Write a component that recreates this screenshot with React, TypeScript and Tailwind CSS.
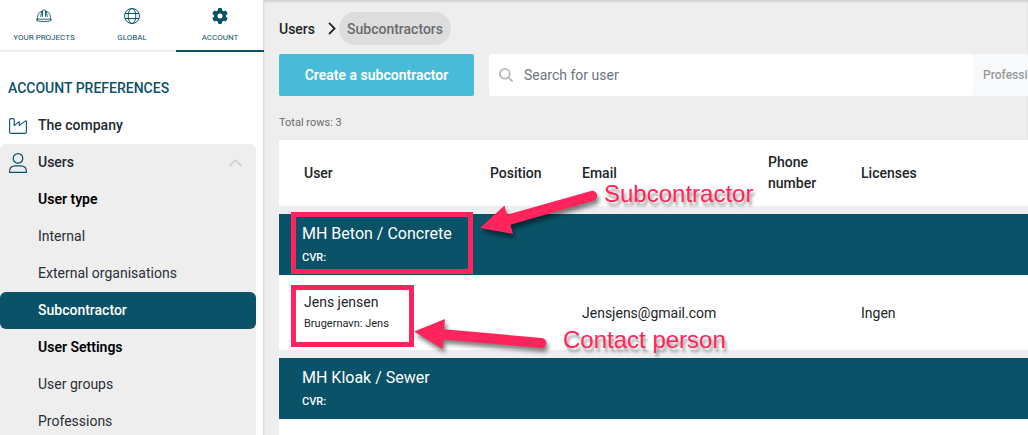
import type { ReactNode } from "react";
import { FaGear } from "react-icons/fa6";

function HelmetIcon() {
  return (
    <svg width="16" height="16" viewBox="0 0 16 16" fill="none" stroke="currentColor" strokeWidth="0.900" strokeLinejoin="round" strokeLinecap="round" aria-hidden="true">
      <path d="M1.500 10.800V9.500A6.500 6.500 0 0 1 5.800 3.300M10.200 3.300a6.500 6.500 0 0 1 4.300 6.200v1.300" />
      <path d="M6.500 8.500V2.800q0-.8.800-.8h1.400q.8 0 .8.800v5.700M5.800 3.300 4.700 8.500M10.200 3.300l1.100 5.200" />
      <path d="M1 11.200h14q.7 0 .5.700-.2.800-1.600 1.100-5.900 1.300-11.800 0-1.400-.3-1.600-1.100-.2-.7.500-.7z" />
    </svg>
  );
}

function GlobeIcon() {
  return (
    <svg width="16" height="16" viewBox="0 0 16 16" fill="none" stroke="currentColor" strokeWidth="1" aria-hidden="true">
      <circle cx="8" cy="8" r="7.500" />
      <ellipse cx="8" cy="8" rx="3.800" ry="7.500" />
      <path d="M1.300 5.500h13.400M1.300 10.500h13.400" />
    </svg>
  );
}

function FactoryIcon() {
  return (
    <svg width="18" height="16" viewBox="0 0 18 16" fill="none" stroke="currentColor" strokeWidth="1.100" strokeLinejoin="round" aria-hidden="true">
      <path d="M.6 2q0-1.400 1.400-1.400h2q1.200 0 1.200 1.200v5.800l4.600-3.700q.5-.3.500.3v3.200l6-4.300q1.100-.6 1.100.5V13.900q0 1.500-1.500 1.500H2.100q-1.500 0-1.500-1.500z" />
    </svg>
  );
}

function PersonIcon() {
  return (
    <svg width="18" height="20" viewBox="0 0 18 20" fill="none" stroke="currentColor" strokeWidth="1.200" strokeLinejoin="round" aria-hidden="true">
      <circle cx="9" cy="5.400" r="4.800" />
      <path d="M.6 19.300v-.8Q.6 12.800 6.300 12.800h5.400q5.700 0 5.700 5.700v.8z" />
    </svg>
  );
}

function Tab({ icon, label, active = false }: { icon: ReactNode; label: string; active?: boolean }) {
  return (
    <a
      href="#"
      aria-current={active ? "page" : undefined}
      className={`flex h-[52px] flex-1 flex-col items-center gap-[9px] border-b-2 pt-2 text-[8px] leading-[10px] ${
        active ? "border-[#0a5268]" : "border-[#eeeeee]"
      }`}
    >
      {icon}
      {label}
    </a>
  );
}

const menu = [
  { label: "User type", kind: "heading" },
  { label: "Internal", kind: "link" },
  { label: "External organisations", kind: "link" },
  { label: "Subcontractor", kind: "active" },
  { label: "User Settings", kind: "heading" },
  { label: "User groups", kind: "link" },
  { label: "Professions", kind: "link" },
];

function Sidebar() {
  return (
    <nav className="w-[264px] shrink-0 border-r border-[#dddddd] bg-white text-sm text-[#0a5268]">
      <div className="-mr-px flex">
        <Tab icon={<HelmetIcon />} label="YOUR PROJECTS" />
        <Tab icon={<GlobeIcon />} label="GLOBAL" />
        <Tab icon={<FaGear size={16} aria-hidden="true" />} label="ACCOUNT" active />
      </div>
      <h2 className="px-2 pt-[26px] pb-[9px] leading-5 font-medium">ACCOUNT PREFERENCES</h2>
      <a href="#" className="flex h-[37px] items-center gap-[11px] pl-[9px] leading-5 font-medium">
        <FactoryIcon />
        <span className="pb-0.5 text-[#222831]">The company</span>
      </a>
      <div className="mr-[7px] rounded-md bg-[#eeeeee]">
        <button type="button" aria-expanded="true" className="flex h-[37px] w-full items-center gap-[11px] pr-[14px] pl-[9px] font-medium">
          <PersonIcon />
          <span className="flex-1 pb-0.5 text-left text-[#222831]">Users</span>
          <svg width="13" height="8" viewBox="0 0 13 8" fill="none" stroke="#c8c8c8" strokeWidth="1.200" aria-hidden="true">
            <path d="M.5 7l6-6 6 6" />
          </svg>
        </button>
        <ul>
          {menu.map((item) => (
            <li key={item.label}>
              {item.kind === "heading" ? (
                <h3 className="flex h-[37px] items-center pb-0.5 pl-[38px] font-semibold text-black">{item.label}</h3>
              ) : (
                <a
                  href="#"
                  className={`flex h-[37px] items-center pb-0.5 pl-[38px] ${
                    item.kind === "active" ? "rounded-md bg-[#0a5268] font-medium text-white" : "text-[#2b2f36]"
                  }`}
                >
                  {item.label}
                </a>
              )}
            </li>
          ))}
        </ul>
      </div>
    </nav>
  );
}

function CompanyRow({ name }: { name: string }) {
  return (
    <tr>
      <th colSpan={5} scope="rowgroup" className="h-[69px] border-t-8 border-[#eeeeee] bg-[#0a5268] px-[23px] text-left font-normal text-white">
        <div className="text-base leading-6">{name}</div>
        <div className="pt-0.5 text-[11px] leading-5 font-medium">CVR:</div>
      </th>
    </tr>
  );
}

const cell = "border-t border-[#eef0f2] px-[25px] text-left";

function UsersTable() {
  return (
    <table className="w-full table-fixed border-separate border-spacing-0 bg-white text-sm text-[#212529]">
      <colgroup>
        <col className="w-[186px]" />
        <col className="w-[92px]" />
        <col className="w-[186px]" />
        <col className="w-[93px]" />
        <col />
      </colgroup>
      <thead>
        <tr className="h-[66px] leading-[21px]">
          {["User", "Position", "Email", "Phone number", "Licenses"].map((title) => (
            <th key={title} scope="col" className="pr-0 pl-[25px] text-left font-medium">
              {title}
            </th>
          ))}
        </tr>
      </thead>
      <tbody>
        <CompanyRow name="MH Beton / Concrete" />
        <tr className="h-[75px]">
          <td className={cell}>
            <div className="leading-5">Jens jensen</div>
            <div className="pt-0.5 text-[11px] leading-5">Brugernavn: Jens</div>
          </td>
          <td className={cell}></td>
          <td className={cell}>Jensjens@gmail.com</td>
          <td className={cell}></td>
          <td className={cell}>Ingen</td>
        </tr>
      </tbody>
      <tbody>
        <CompanyRow name="MH Kloak / Sewer" />
        <tr className="h-[75px]">
          <td colSpan={5} className={cell}></td>
        </tr>
      </tbody>
    </table>
  );
}

function Annotations() {
  return (
    <div className="pointer-events-none absolute inset-0 font-['Liberation_Sans',Arial,sans-serif] text-2xl leading-7 text-[#ff255c]">
      <div className="absolute top-[212px] left-[291px] h-[62px] w-[182px] border-5 border-[#ff255c]" />
      <div className="absolute top-[285px] left-[291px] h-[62px] w-[123px] border-5 border-[#ff255c]" />
      <svg className="absolute top-[190px] left-[410px] drop-shadow-[2px_4px_2px_rgba(0,0,0,0.5)]" width="200" height="170" viewBox="410 190 200 170" fill="#ff255c" aria-hidden="true">
        <path d="M480 228l24.500-22.500 2.500 9.300 84-23.800a5 5 0 0 1 3 9.500l-83.500 24.300 2.500 9.200z" />
        <path d="M414 331.500l31-12.500-.8 10.200 97.500 8.800a5 5 0 0 1-.7 10l-97.500-8.500-.8 9.500z" />
      </svg>
      <span className="absolute top-[180px] left-[604px] whitespace-nowrap [text-shadow:2px_4px_3px_rgba(0,0,0,0.4)]">Subcontractor</span>
      <span className="absolute top-[326px] left-[563px] whitespace-nowrap [text-shadow:2px_4px_3px_rgba(0,0,0,0.4)]">Contact person</span>
    </div>
  );
}

export default function App() {
  return (
    <div className="relative flex h-screen overflow-hidden bg-[#eeeeee] font-[Roboto,sans-serif]">
      <Sidebar />
      <main className="min-w-0 flex-1 pt-3 pl-[15px] text-sm shadow-[inset_0_2px_2px_rgba(0,0,0,0.12)]">
        <nav aria-label="Breadcrumb" className="flex h-[33px] items-center font-medium">
          <a href="#" className="text-[#212529]">Users</a>
          <svg className="mr-[3px] ml-[13px]" width="8" height="13" viewBox="0 0 8 13" fill="none" stroke="#212529" strokeWidth="1.800" aria-hidden="true">
            <path d="M1 .8l5.600 5.700L1 12.200" />
          </svg>
          <span className="flex h-full items-center rounded-full bg-[#dddddd] px-2 text-[#6c6c6c]">Subcontractors</span>
        </nav>
        <div className="mt-[9px] flex h-[42px]">
          <button type="button" className="w-[195px] shrink-0 rounded-xs bg-[#47bbd7] font-semibold text-white">
            Create a subcontractor
          </button>
          <label className="ml-[15px] flex min-w-0 flex-1 items-center gap-[11px] rounded-xs bg-white pl-[10px]">
            <svg className="shrink-0" width="14" height="14" viewBox="0 0 14 14" fill="none" stroke="#b9b9b9" strokeWidth="1.800" aria-hidden="true">
              <circle cx="5.800" cy="5.800" r="4.900" />
              <path d="M9.300 9.300l4.300 4.300" />
            </svg>
            <input type="search" aria-label="Search for user" placeholder="Search for user" className="min-w-0 flex-1 outline-none placeholder:text-[#6c757d]" />
          </label>
          <button type="button" className="w-[55px] shrink-0 overflow-hidden rounded-l-xs bg-[#f8f9fb] pl-[10px] text-left text-xs font-medium whitespace-nowrap text-[#999999]">
            Professions
          </button>
        </div>
        <p className="pt-[17px] pb-[7px] text-[11px] leading-5 text-[#6c6c6c]">Total rows: 3</p>
        <UsersTable />
      </main>
      <Annotations />
    </div>
  );
}
